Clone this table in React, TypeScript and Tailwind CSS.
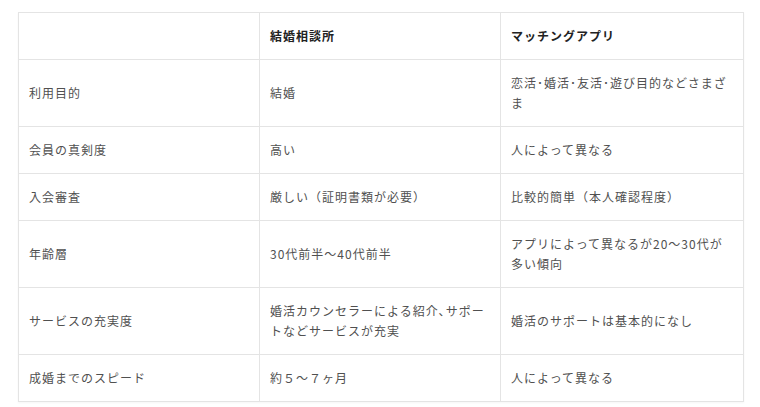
import React from 'react';

const rows: { label: string; a: React.ReactNode; b: React.ReactNode }[] = [
  {
    label: '利用目的',
    a: '結婚',
    b: (
      <>
        恋活･婚活･友活･遊び目的などさまざ
        <br />ま
      </>
    ),
  },
  { label: '会員の真剣度', a: '高い', b: '人によって異なる' },
  { label: '入会審査', a: '厳しい（証明書類が必要）', b: '比較的簡単（本人確認程度）' },
  {
    label: '年齢層',
    a: '30代前半〜40代前半',
    b: (
      <>
        アプリによって異なるが20〜30代が
        <br />
        多い傾向
      </>
    ),
  },
  {
    label: 'サービスの充実度',
    a: (
      <>
        婚活カウンセラーによる紹介､サポー
        <br />
        トなどサービスが充実
      </>
    ),
    b: '婚活のサポートは基本的になし',
  },
  { label: '成婚までのスピード', a: '約５〜７ヶ月', b: '人によって異なる' },
];

const cell = 'border border-[#e4e4e4] px-[10px] py-[13px] align-middle text-left whitespace-nowrap overflow-hidden';

const App: React.FC = () => {
  return (
    <div
      className="bg-white w-[760px] h-[407px] pt-[12px] pl-[18px]"
      style={{ fontFamily: '"Noto Sans CJK JP", "Noto Sans", sans-serif' }}
    >
      <table className="w-[725px] table-fixed border-collapse text-[12px] leading-[20px] tracking-[1px] text-[#505050] shadow-[0_1px_2px_rgba(0,0,0,0.04)]">
        <colgroup>
          <col className="w-[241px]" />
          <col className="w-[241px]" />
          <col className="w-[243px]" />
        </colgroup>
        <thead>
          <tr>
            <th className={cell}></th>
            <th className={`${cell} font-bold text-[#222] py-[12px]`}>結婚相談所</th>
            <th className={`${cell} font-bold text-[#222] py-[12px]`}>マッチングアプリ</th>
          </tr>
        </thead>
        <tbody>
          {rows.map((r) => (
            <tr key={r.label}>
              <td className={cell}>{r.label}</td>
              <td className={cell}>{r.a}</td>
              <td className={cell}>{r.b}</td>
            </tr>
          ))}
        </tbody>
      </table>
    </div>
  );
};

export default App;
